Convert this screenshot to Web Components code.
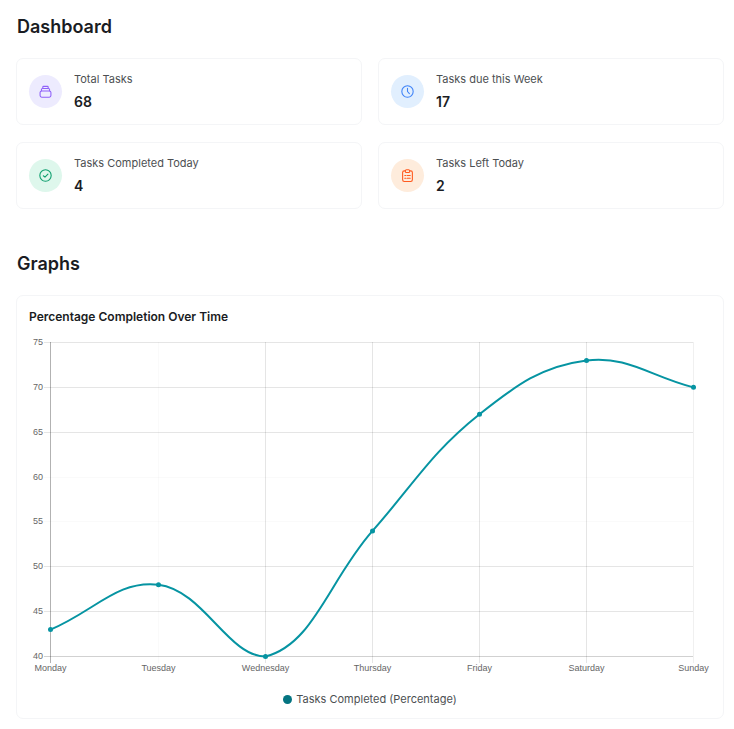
<!DOCTYPE html>
<html lang="en">
<head>
<meta charset="utf-8">
<meta name="viewport" content="width=device-width, initial-scale=1">
<title>Dashboard</title>
<style>
body { margin: 0; background: #fff; font-family: Inter, "Liberation Sans", sans-serif; color: #1a1c23; }
</style>
</head>
<body>
<dash-page>
  <dash-section heading="Dashboard">
    <stat-grid>
      <stat-card label="Total Tasks" value="68" tone="purple">
        <svg viewBox="0 0 24 24"><rect x="2" y="11" width="20" height="11.500" rx="3"/><path d="M4.500 10.500V8.500a2 2 0 0 1 2-2h11a2 2 0 0 1 2 2v2M7 6.500V4a1.500 1.500 0 0 1 1.500-1.500h7A1.500 1.500 0 0 1 17 4v2.500"/></svg>
      </stat-card>
      <stat-card label="Tasks due this Week" value="17" tone="blue">
        <svg viewBox="0 0 24 24"><circle cx="12" cy="12" r="10.500"/><path d="M12 6v6l3.500 4"/></svg>
      </stat-card>
      <stat-card label="Tasks Completed Today" value="4" tone="green">
        <svg viewBox="0 0 24 24"><circle cx="12" cy="12" r="10.500"/><path d="M8 12.500l3 2.500 5.500-5.500"/></svg>
      </stat-card>
      <stat-card label="Tasks Left Today" value="2" tone="orange">
        <svg viewBox="0 0 24 24"><path d="M8 3.500H6a3 3 0 0 0-3 3V20a3 3 0 0 0 3 3h12a3 3 0 0 0 3-3V6.500a3 3 0 0 0-3-3h-2"/><rect x="8" y="1.500" width="8" height="5" rx="2"/><path d="M7 12h2M11.500 12H17M7 17h2M11.500 17H17"/></svg>
      </stat-card>
    </stat-grid>
  </dash-section>
  <dash-section heading="Graphs">
    <chart-card heading="Percentage Completion Over Time">
      <line-chart></line-chart>
      <chart-legend slot="legend">Tasks Completed (Percentage)</chart-legend>
    </chart-card>
  </dash-section>
</dash-page>

<script>
const define = (name, markup, setup) => customElements.define(name, class extends HTMLElement {
  connectedCallback() {
    if (this.shadowRoot) return;
    const root = this.attachShadow({ mode: "open" });
    const template = document.createElement("template");
    template.innerHTML = markup;
    root.append(template.content.cloneNode(true));
    if (setup) setup(this, root);
  }
});

define("dash-page", `
  <style>
    :host { display: block; }
    main { display: flex; flex-direction: column; gap: 42px; padding: 14px 10px 10px 16px; }
  </style>
  <main><slot></slot></main>`);

define("dash-section", `
  <style>
    :host { display: block; }
    h2 { margin: 0 0 18px; padding-left: 1px; font-size: 18px; line-height: 26px; font-weight: 600; }
  </style>
  <section><h2></h2><slot></slot></section>`,
  (host, root) => { root.querySelector("h2").textContent = host.getAttribute("heading"); });

define("stat-grid", `
  <style>
    :host { display: grid; grid-template-columns: repeat(auto-fit, minmax(240px, 1fr)); gap: 17px 16px; }
  </style>
  <slot></slot>`);

define("stat-card", `
  <style>
    :host { display: flex; align-items: center; gap: 12px; box-sizing: border-box; padding: 10px 12px;
      border: 1px solid #f4f5f7; border-radius: 7px; min-height: 67px; }
    :host([tone=purple]) { --ink: #9061f9; --tint: #edebfe; }
    :host([tone=blue]) { --ink: #3f83f8; --tint: #e1effe; }
    :host([tone=green]) { --ink: #0e9f6e; --tint: #def7ec; }
    :host([tone=orange]) { --ink: #ff5a1f; --tint: #feecdc; }
    .icon { display: grid; place-items: center; flex: none; width: 33px; height: 33px; border-radius: 50%;
      background: var(--tint); color: var(--ink); }
    ::slotted(svg) { width: 13px; height: 13px; fill: none; stroke: currentColor; stroke-width: 2;
      stroke-linecap: round; stroke-linejoin: round; }
    p { margin: 0; }
    .label { margin-bottom: 5px; font-size: 11px; line-height: 16px; color: #4c4f52; }
    .value { font-size: 14px; line-height: 20px; font-weight: 600; }
  </style>
  <div class="icon"><slot></slot></div>
  <div><p class="label"></p><p class="value"></p></div>`,
  (host, root) => {
    root.querySelector(".label").textContent = host.getAttribute("label");
    root.querySelector(".value").textContent = host.getAttribute("value");
  });

define("chart-card", `
  <style>
    :host { display: block; padding: 12px 12px 11px; border: 1px solid #f4f5f7; border-radius: 7px; }
    h3 { margin: 0; font-size: 12px; line-height: 18px; font-weight: 600; }
  </style>
  <h3></h3><slot></slot><slot name="legend"></slot>`,
  (host, root) => { root.querySelector("h3").textContent = host.getAttribute("heading"); });

define("chart-legend", `
  <style>
    :host { display: flex; justify-content: center; align-items: center; gap: 4px; margin-top: 16px;
      font-size: 11px; line-height: 16px; color: #4c4f52; }
    i { width: 9px; height: 9px; border-radius: 50%; background: #047481; }
  </style>
  <i></i><span><slot></slot></span>`);

const points = [["Monday", 43], ["Tuesday", 48], ["Wednesday", 40], ["Thursday", 54], ["Friday", 67], ["Saturday", 73], ["Sunday", 70]];
const columnInk = [.3, .02, .1, .1, .1, .1, .06];
const rowInk = { 75: .1, 70: .1, 65: .1, 60: .02, 55: .02, 50: .1, 45: .1, 40: .18 };

/* Cubic path through the points; each handle is weighted by the distance to its
   neighbours and kept inside the plot, so the curve never dips under the axis. */
function smoothPath(pts, tension, top, bottom) {
  const clamp = v => Math.min(bottom, Math.max(top, v));
  const handles = pts.map((p, i) => {
    const a = pts[i - 1] || p, b = pts[i + 1] || p;
    const before = Math.hypot(p[0] - a[0], p[1] - a[1]), after = Math.hypot(b[0] - p[0], b[1] - p[1]);
    const fa = tension * before / (before + after), fb = tension * after / (before + after);
    return [[p[0] - fa * (b[0] - a[0]), clamp(p[1] - fa * (b[1] - a[1]))],
            [p[0] + fb * (b[0] - a[0]), clamp(p[1] + fb * (b[1] - a[1]))]];
  });
  return pts.map((p, i) => i ? `C${handles[i - 1][1]} ${handles[i][0]} ${p}` : `M${p}`).join("");
}

define("line-chart", `
  <style>
    :host { display: block; height: 349px; }
    svg { display: block; width: 100%; height: 100%; overflow: visible; }
    text { font-family: "Liberation Sans", sans-serif; font-size: 9px; fill: #666; }
    .grid { stroke: #000; shape-rendering: crispEdges; }
    .curve { fill: none; stroke: #0694a2; stroke-width: 2; }
    circle { fill: #0694a2; }
  </style>
  <svg role="img" aria-label="Tasks completed, percentage by weekday"></svg>`,
  (host, root) => {
    const svg = root.querySelector("svg");
    const draw = () => {
      const left = 21, right = host.clientWidth - 18, top = 16, bottom = 330;
      const x = i => Math.ceil(left + (right - left) * i / (points.length - 1));
      const y = v => bottom - (bottom - top) * (v - 40) / 35;
      let out = "";
      points.forEach(([day], i) => {
        out += `<path class="grid" stroke-opacity="${columnInk[i]}" d="M${x(i) + .5} ${top}V${bottom + 7}"/>` +
          `<text x="${x(i) + .5}" y="${bottom + 15}" text-anchor="middle">${day}</text>`;
      });
      for (let v = 40; v <= 75; v += 5) {
        const py = Math.round(y(v));
        out += `<path class="grid" stroke-opacity="${rowInk[v]}" d="M${left - 6} ${py + .5}H${right}"/>` +
          `<text x="${left - 7}" y="${py + 3}" text-anchor="end">${v}</text>`;
      }
      const pts = points.map(([, v], i) => [x(i) + .5, y(v) + .5]);
      out += `<path class="curve" d="${smoothPath(pts, .4, top + .5, bottom + .5)}"/>` +
        pts.map(p => `<circle cx="${p[0]}" cy="${p[1]}" r="2.500"/>`).join("");
      svg.innerHTML = out;
    };
    draw();
    new ResizeObserver(draw).observe(host);
  });
</script>
</body>
</html>
